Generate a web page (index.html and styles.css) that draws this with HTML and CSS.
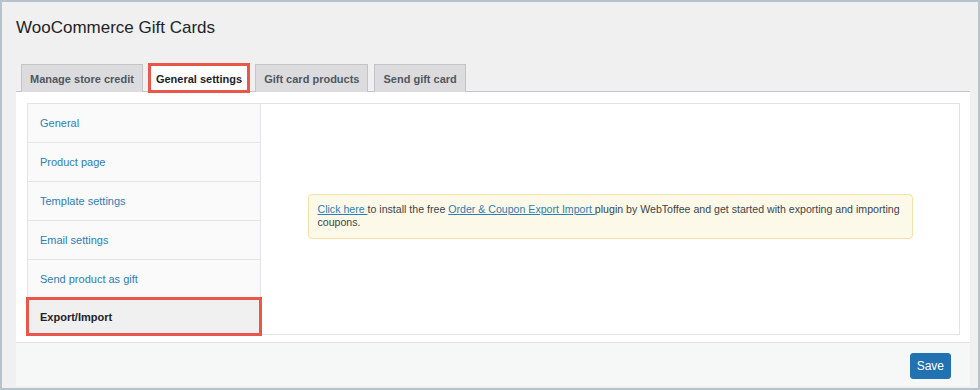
FILE: index.html
```html
<!DOCTYPE html>
<html lang="en">
<head>
<meta charset="utf-8">
<title>WooCommerce Gift Cards</title>
<link rel="stylesheet" href="styles.css">
</head>
<body>
<div class="frame">
  <h1 class="title">WooCommerce Gift Cards</h1>
  <nav class="tabs">
    <a class="tab" href="#">Manage store credit</a>
    <a class="tab tab-active" href="#">General settings</a>
    <a class="tab" href="#">Gift card products</a>
    <a class="tab" href="#">Send gift card</a>
  </nav>
  <div class="panel">
    <div class="settings">
      <ul class="side">
        <li class="side-item"><a href="#">General</a></li>
        <li class="side-item"><a href="#">Product page</a></li>
        <li class="side-item"><a href="#">Template settings</a></li>
        <li class="side-item"><a href="#">Email settings</a></li>
        <li class="side-item"><a href="#">Send product as gift</a></li>
        <li class="side-item side-active">Export/Import</li>
      </ul>
      <div class="content">
        <div class="notice"><a href="#">Click here </a>to install the free <a href="#">Order &amp; Coupon Export Import </a>plugin by WebToffee and get started with exporting and importing coupons.</div>
      </div>
    </div>
  </div>
  <div class="footer">
    <button class="save" type="button">Save</button>
  </div>
</div>
</body>
</html>
```

FILE: styles.css
```css
html, body {
  margin: 0;
  padding: 0;
}

body {
  font-family: "Liberation Sans", Arial, sans-serif;
  background: #ffffff;
}

.frame {
  box-sizing: border-box;
  width: 980px;
  height: 390px;
  border: 2px solid #b7c3cc;
  background: #f0f0f1;
  display: flex;
  flex-direction: column;
}

.title {
  margin: 14px 0 0 14px;
  font-size: 17px;
  line-height: 23px;
  font-weight: 400;
  color: #1d2327;
}

.tabs {
  display: flex;
  gap: 6px;
  margin: 25px 8px 0 14px;
  padding-left: 5px;
  height: 27px;
}

.tab {
  box-sizing: border-box;
  height: 28px;
  margin-bottom: -1px;
  padding: 0 8px;
  display: flex;
  align-items: center;
  font-size: 11px;
  font-weight: 700;
  color: #50575e;
  text-decoration: none;
  background: #dcdcde;
  border: 1px solid #c3c4c7;
  border-bottom: none;
  position: relative;
}

.tab-active {
  background: #ffffff;
  color: #1d2327;
  padding: 0 6px;
  outline: 3px solid #e9574a;
  outline-offset: -2px;
  z-index: 1;
}

.panel {
  margin: 0 8px 0 14px;
  background: #ffffff;
  border-top: 1px solid #c3c4c7;
  border-bottom: 1px solid #e4e4e4;
  padding: 11px 10px 7px 11px;
}

.settings {
  display: flex;
  height: 232px;
  box-sizing: border-box;
  border: 1px solid #e2e4e7;
}

.side {
  list-style: none;
  margin: 0;
  padding: 0;
  width: 232px;
  background: #fafafa;
  border-right: 1px solid #e2e4e7;
  display: flex;
  flex-direction: column;
}

.side-item {
  box-sizing: border-box;
  height: 39px;
  flex: none;
  display: flex;
  align-items: center;
  padding-left: 12px;
  border-bottom: 1px solid #e5e5e5;
  font-size: 11px;
}

.side-item a {
  color: #2e7db6;
  text-decoration: none;
}

.side-active {
  flex: 1;
  border-bottom: none;
  background: #f0f0f0;
  color: #1d2327;
  font-weight: 700;
  outline: 3px solid #e9574a;
  outline-offset: -1px;
}

.content {
  flex: 1;
  display: flex;
  align-items: center;
  justify-content: center;
  padding-bottom: 5px;
}

.notice {
  box-sizing: border-box;
  width: 605px;
  padding: 8px 9px 9px;
  background: #fcf9e8;
  border: 1px solid #f3e2a4;
  border-radius: 4px;
  font-size: 10.6px;
  line-height: 13px;
  color: #3c434a;
}

.notice a {
  color: #2e7db6;
  text-decoration: underline;
}

.footer {
  flex: 1;
  margin: 0 8px 2px 14px;
  background: #f6f7f7;
  display: flex;
  justify-content: flex-end;
  align-items: flex-start;
  padding: 10px 19px 0 0;
}

.save {
  box-sizing: border-box;
  height: 26px;
  padding: 0 6px;
  background: #2271b1;
  color: #ffffff;
  border: 1px solid #2271b1;
  border-radius: 3px;
  font-family: "Liberation Sans", Arial, sans-serif;
  font-size: 12px;
}
```
